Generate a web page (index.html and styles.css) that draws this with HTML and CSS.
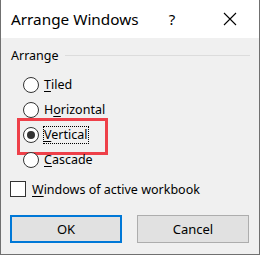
FILE: index.html
```html
<!DOCTYPE html>
<html lang="en">
<head>
  <meta charset="UTF-8" />
  <title>Arrange Windows</title>
  <link rel="stylesheet" href="styles.css">
</head>
<body>
  <div class="window">
    <div class="titlebar">
      <div class="title">Arrange Windows</div>
      <div class="help">?</div>
      <div class="close">
        <svg width="14" height="14" viewBox="0 0 14 14"><path d="M1 1 L13 13 M13 1 L1 13" stroke="#000" stroke-width="1.1" fill="none"/></svg>
      </div>
    </div>

    <div class="content">
      <div class="group-head">
        <span class="group-label">Arrange</span>
        <span class="group-line"></span>
      </div>

      <div class="radios">
        <div class="radio-row"><span class="radio"></span><span class="label"><u>T</u>iled</span></div>
        <div class="radio-row"><span class="radio"></span><span class="label">H<u>o</u>rizontal</span></div>
        <div class="radio-row highlight"><span class="radio checked"></span><span class="label focus"><u>V</u>ertical</span></div>
        <div class="radio-row"><span class="radio"></span><span class="label"><u>C</u>ascade</span></div>
      </div>

      <div class="check-row"><span class="checkbox"></span><span class="label"><u>W</u>indows of active workbook</span></div>

      <div class="buttons">
        <button class="btn default">OK</button>
        <button class="btn">Cancel</button>
      </div>
    </div>
  </div>
</body>
</html>
```

FILE: styles.css
```css
* {
  margin: 0;
  padding: 0;
  box-sizing: border-box;
}
body {
  font-family: 'Noto Sans', 'Open Sans', sans-serif;
  font-size: 12.5px;
  color: #000;
  background: #f0f0f0;
}
.window {
  width: 260px;
  height: 255px;
  border: 1px solid #707070;
  border-top: none;
  background: #f0f0f0;
  display: flex;
  flex-direction: column;
}
.titlebar {
  height: 38px;
  background: #fff;
  display: flex;
  align-items: center;
  padding-left: 10px;
}
.title {
  font-size: 15.3px;
  flex: 1;
}
.help {
  width: 46px;
  text-align: center;
  font-size: 15px;
}
.close {
  width: 46px;
  height: 38px;
  margin-left: 12px;
  margin-right: 6px;
  display: flex;
  align-items: center;
  justify-content: center;
}
.content {
  padding: 8px 9px 0 9px;
}
.group-head {
  height: 18px;
  display: flex;
  align-items: center;
}
.group-label {
  padding-left: 1px;
}
.group-line {
  flex: 1;
  height: 1px;
  background: #dcdcdc;
  margin-left: 6px;
}
.radios {
  margin-top: 8px;
  margin-left: 13px;
}
.radio-row {
  height: 25px;
  display: flex;
  align-items: center;
  position: relative;
}
.radio {
  width: 16px;
  height: 16px;
  border: 1px solid #333;
  border-radius: 50%;
  background: #fff;
  margin-right: 5px;
  display: flex;
  align-items: center;
  justify-content: center;
}
.radio.checked::after {
  content: "";
  width: 8px;
  height: 8px;
  border-radius: 50%;
  background: #333;
}
.label u {
  text-underline-offset: 2px;
}
.focus {
  border: 1px dotted #000;
  margin-left: -1px;
  padding: 0 1px 0 0;
  line-height: 16px;
}
.highlight::before {
  content: "";
  position: absolute;
  left: -6px;
  top: -4px;
  width: 85px;
  height: 31px;
  border: 3px solid #ee4049;
}
.check-row {
  margin-top: 7px;
  height: 20px;
  display: flex;
  align-items: center;
}
.checkbox {
  width: 16px;
  height: 16px;
  border: 1px solid #333;
  background: #fff;
  margin-right: 6px;
}
.buttons {
  margin-top: 16px;
  display: flex;
  gap: 15px;
}
.btn {
  width: 112px;
  height: 28px;
  background: #e1e1e1;
  border: 1px solid #adadad;
  font-family: inherit;
  font-size: 13px;
  color: #000;
}
.btn.default {
  border: 2px solid #0078d7;
}
```
